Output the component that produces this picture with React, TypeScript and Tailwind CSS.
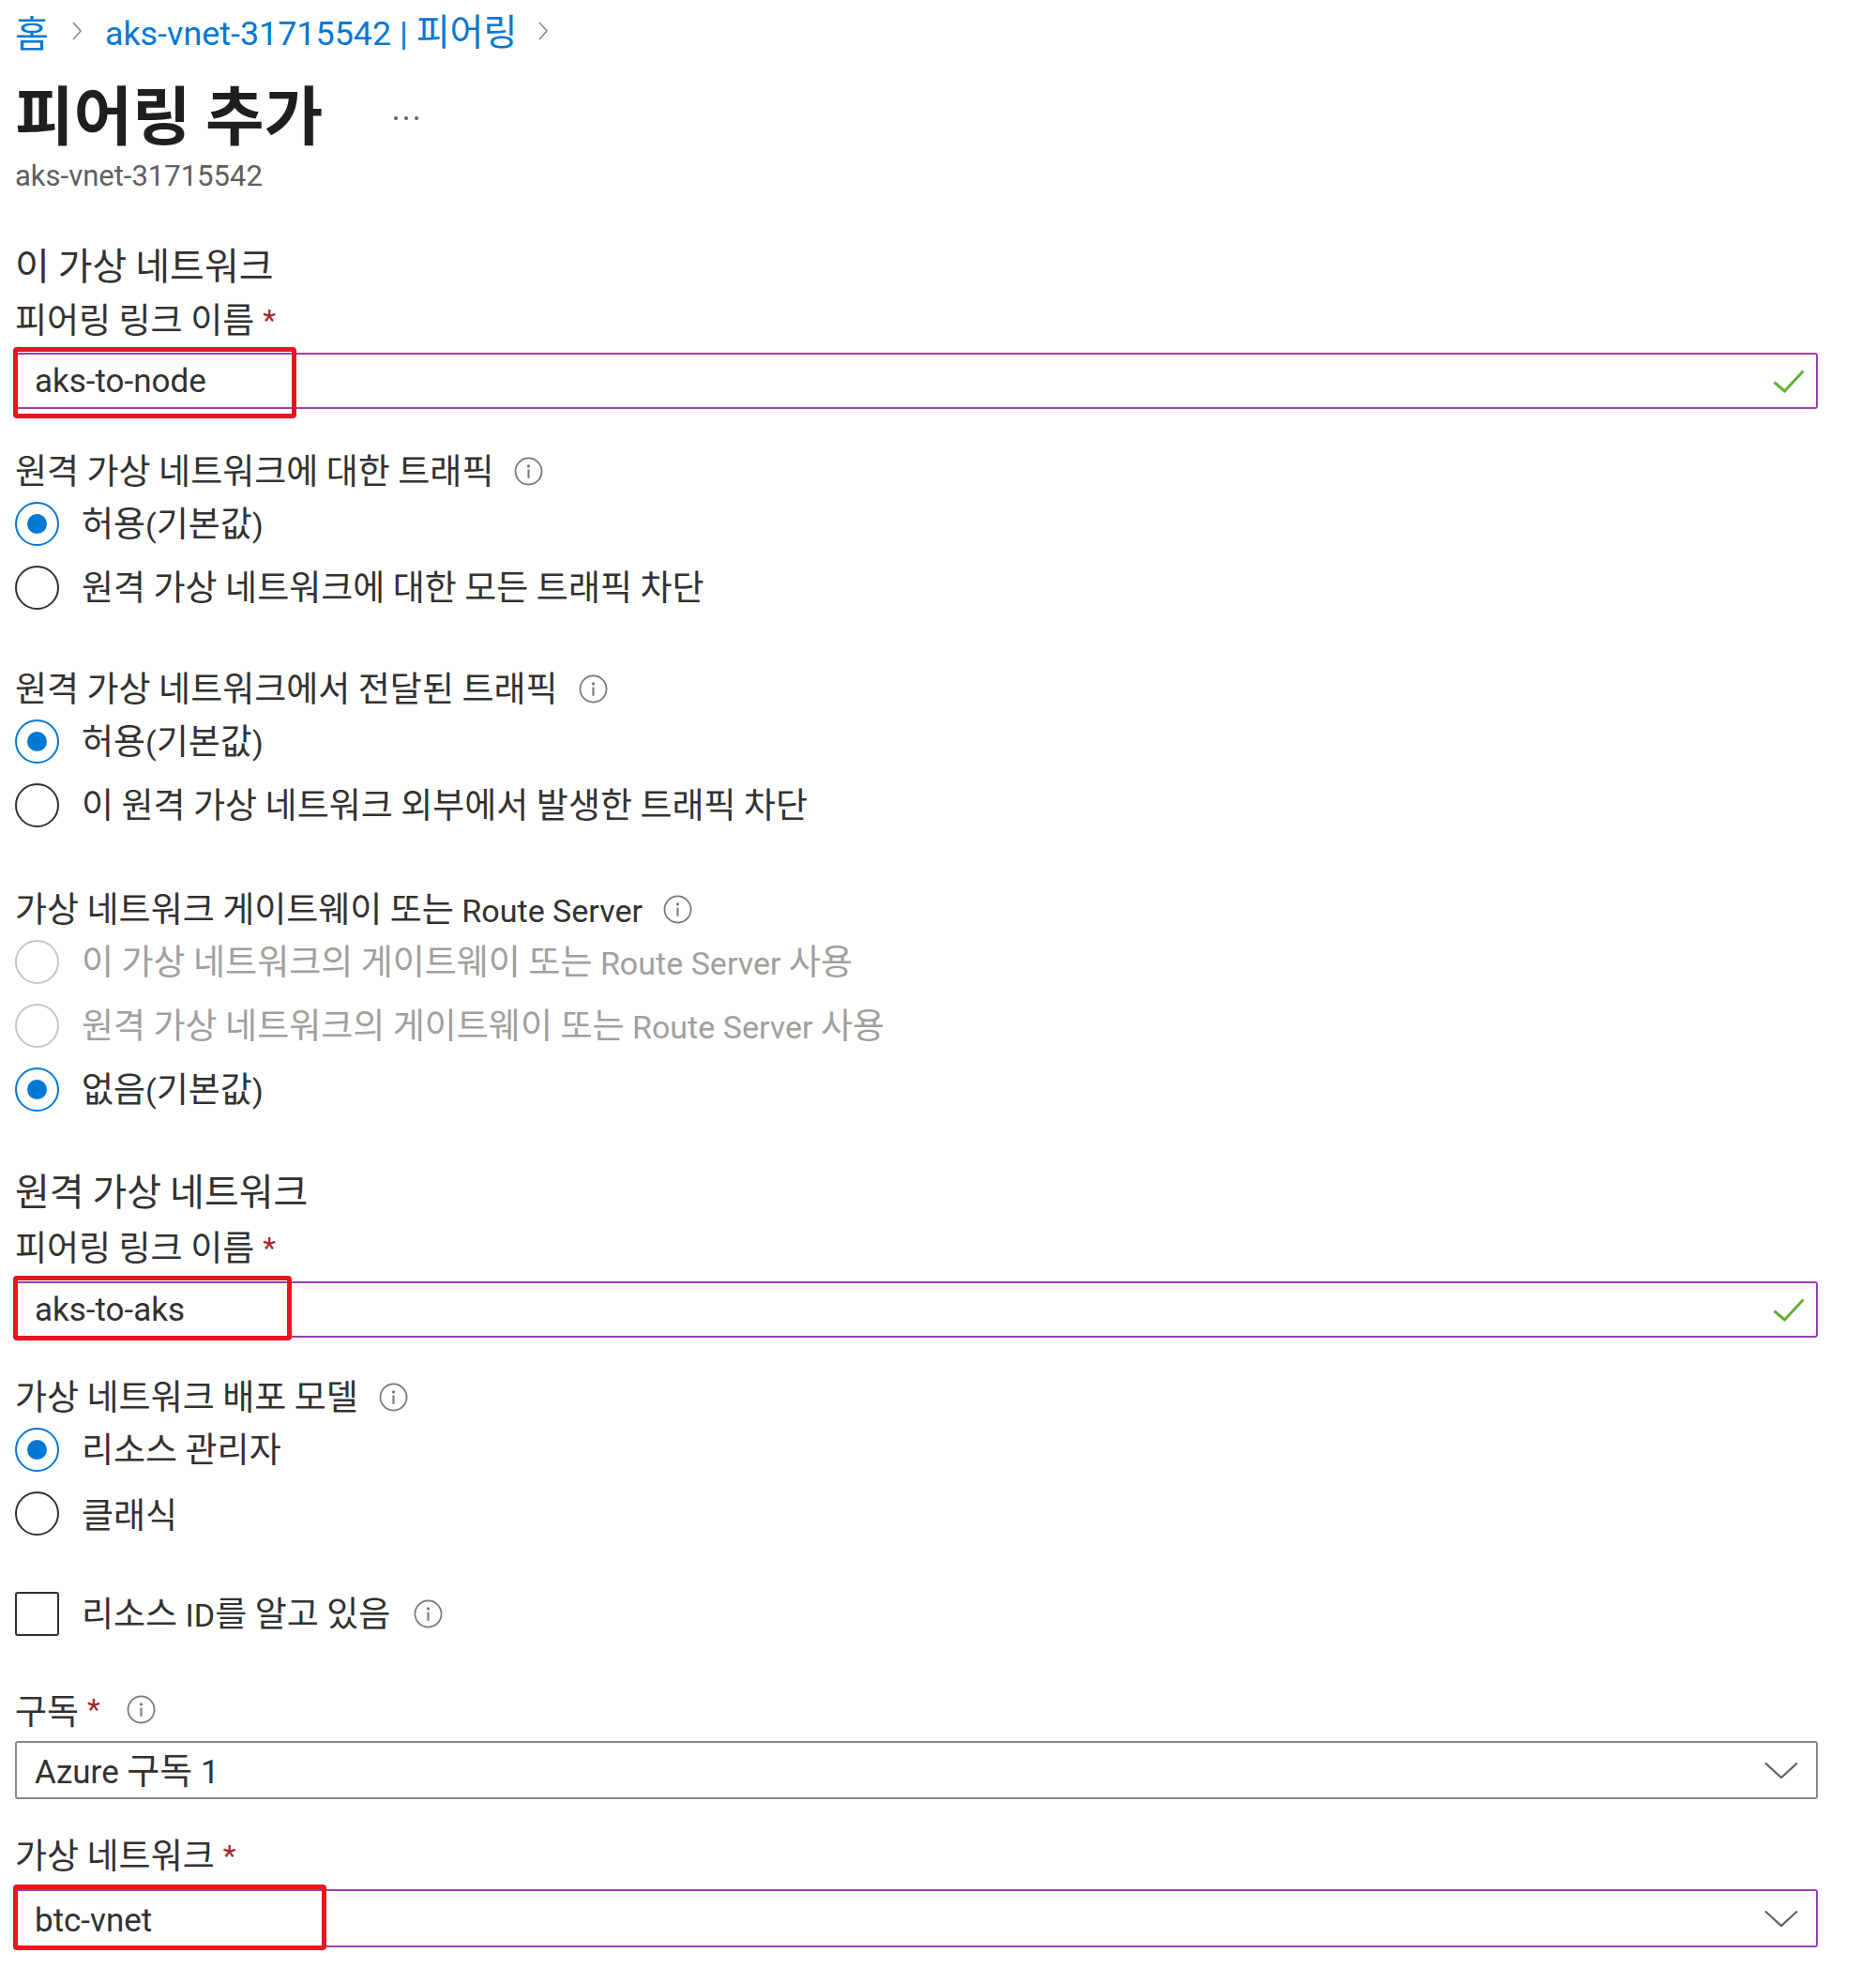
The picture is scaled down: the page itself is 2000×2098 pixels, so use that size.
const ink = "text-[#323130]";

// Hangul runs stay in Noto Sans CJK KR, the rest goes to Roboto a bit smaller
function Mixed({ text }: { text: string }) {
  const parts = text.split(/([\uAC00-\uD7A3\u3131-\u318E]+)/).filter(p => p !== "");
  return (
    <>
      {parts.map((p, i) =>
        /[\uAC00-\uD7A3\u3131-\u318E]/.test(p) ? (
          <span key={i}>{p}</span>
        ) : (
          <span key={i} className="font-['Roboto'] text-[0.92em]">{p}</span>
        )
      )}
    </>
  );
}

function InfoIcon() {
  return (
    <svg width="31" height="31" viewBox="0 0 32 32" className="shrink-0">
      <circle cx="16" cy="16" r="14.5" fill="none" stroke="#7a7977" strokeWidth="1.8" />
      <circle cx="16" cy="10.2" r="1.7" fill="#7a7977" />
      <line x1="16" y1="14" x2="16" y2="23.5" stroke="#7a7977" strokeWidth="2.2" />
    </svg>
  );
}

function Crumb() {
  return (
    <svg width="12" height="22" viewBox="0 0 12 22" className="shrink-0">
      <path d="M2 2 L10 11 L2 20" fill="none" stroke="#8a8886" strokeWidth="1.6" />
    </svg>
  );
}

function Chevron() {
  return (
    <svg width="36" height="19" viewBox="0 0 36 19">
      <path d="M1 1.5 L18 17 L35 1.5" fill="none" stroke="#605e5c" strokeWidth="2.2" />
    </svg>
  );
}

function Check() {
  return (
    <svg width="34" height="25" viewBox="0 0 34 25">
      <path d="M1.5 13.5 L12.5 23 L32.5 1.5" fill="none" stroke="#62b134" strokeWidth="3" />
    </svg>
  );
}

function Label({ text, required, info, className = "" }: { text: string; required?: boolean; info?: boolean; className?: string }) {
  return (
    <div className={`flex items-center h-[44px] text-[37px] leading-none ${ink} ${className}`}>
      <span><Mixed text={text} /></span>
      {required && <span className="ml-[9px] font-['Roboto'] text-[#a4262c] text-[32px] leading-none">*</span>}
      {info && <span className={required ? "ml-[28px]" : "ml-[22px]"}><InfoIcon /></span>}
    </div>
  );
}

function Radio({ label, checked, disabled }: { label: string; checked?: boolean; disabled?: boolean }) {
  const ring = checked ? "border-[#0078d4]" : disabled ? "border-[#c8c6c4]" : "border-[#323130]";
  return (
    <div className="flex items-center h-[68px]">
      <div className={`w-[47px] h-[47px] rounded-full border-[2.5px] ${ring} flex items-center justify-center shrink-0`}>
        {checked && <div className="w-[21px] h-[21px] rounded-full bg-[#0078d4]" />}
      </div>
      <span className={`ml-[24px] text-[37px] leading-none ${disabled ? "text-[#a19f9d]" : ink}`}>
        <Mixed text={label} />
      </span>
    </div>
  );
}

function Highlight({ w, top, bottom }: { w: number; top: number; bottom: number }) {
  return (
    <div
      className="absolute left-[-4px] border-[5px] border-[#e8141e] rounded-[4px] pointer-events-none"
      style={{ width: w, top: -top, bottom: -bottom }}
    />
  );
}

function TextBox({ value, mark, w, top, bottom }: { value: string; mark?: boolean; w: number; top: number; bottom: number }) {
  return (
    <div className="relative h-[60px] border-2 border-[#9b3fb6] rounded-[3px] flex items-center pl-[19px] pr-[12px]">
      <span className={`font-['Roboto'] text-[35px] leading-none ${ink} flex-1`}>{value}</span>
      {mark && <Check />}
      <Highlight w={w} top={top} bottom={bottom} />
    </div>
  );
}

function Dropdown({ value, purple, mark }: { value: string; purple?: boolean; mark?: boolean }) {
  return (
    <div
      className={`relative h-[62px] border-2 ${purple ? "border-[#9b3fb6]" : "border-[#8a8886]"} rounded-[3px] flex items-center pl-[19px] pr-[19px]`}
    >
      <span className={`text-[38px] leading-none ${ink} flex-1`}><Mixed text={value} /></span>
      <Chevron />
      {mark && <Highlight w={334} top={7} bottom={5} />}
    </div>
  );
}

export default function App() {
  return (
    <div className="min-h-screen bg-white font-['Noto_Sans_CJK_KR',sans-serif] pl-[16px] pt-[11px] pb-[20px]">
      <div className="w-[1922px]">
        {/* breadcrumb */}
        <div className="flex items-center h-[44px] text-[39px] leading-none text-[#0078d4]">
          <span>홈</span>
          <span className="mx-[24px]"><Crumb /></span>
          <span><Mixed text="aks-vnet-31715542 | 피어링" /></span>
          <span className="ml-[22px]"><Crumb /></span>
        </div>

        <div className="mt-[25px] flex items-center h-[80px]">
          <h1 className="text-[68px] leading-[80px] font-bold text-[#201f1e]">피어링 추가</h1>
          <div className="ml-[76px] mt-[12px] flex gap-[7px]">
            <span className="w-[4px] h-[4px] rounded-full bg-[#605e5c]" />
            <span className="w-[4px] h-[4px] rounded-full bg-[#605e5c]" />
            <span className="w-[4px] h-[4px] rounded-full bg-[#605e5c]" />
          </div>
        </div>
        <div className="mt-[5px] h-[44px] flex items-center font-['Roboto'] text-[31px] leading-none text-[#605e5c]">aks-vnet-31715542</div>

        <div className={`mt-[45px] h-[54px] flex items-center text-[40px] leading-none ${ink}`}>이 가상 네트워크</div>
        <Label className="mt-[11px]" text="피어링 링크 이름" required />
        <div className="mt-[13px]">
          <TextBox value="aks-to-node" mark w={302} top={8} bottom={12} />
        </div>

        <Label className="mt-[44px]" text="원격 가상 네트워크에 대한 트래픽" info />
        <Radio label="허용(기본값)" checked />
        <Radio label="원격 가상 네트워크에 대한 모든 트래픽 차단" />

        <Label className="mt-[52px]" text="원격 가상 네트워크에서 전달된 트래픽" info />
        <Radio label="허용(기본값)" checked />
        <Radio label="이 원격 가상 네트워크 외부에서 발생한 트래픽 차단" />

        <Label className="mt-[55px]" text="가상 네트워크 게이트웨이 또는 Route Server" info />
        <Radio label="이 가상 네트워크의 게이트웨이 또는 Route Server 사용" disabled />
        <Radio label="원격 가상 네트워크의 게이트웨이 또는 Route Server 사용" disabled />
        <Radio label="없음(기본값)" checked />

        <div className={`mt-[46px] h-[54px] flex items-center text-[40px] leading-none ${ink}`}>원격 가상 네트워크</div>
        <Label className="mt-[13px]" text="피어링 링크 이름" required />
        <div className="mt-[14px]">
          <TextBox value="aks-to-aks" mark w={297} top={8} bottom={5} />
        </div>

        <Label className="mt-[41px]" text="가상 네트워크 배포 모델" info />
        <Radio label="리소스 관리자" checked />
        <Radio label="클래식" />

        <div className="mt-[39px] flex items-center h-[68px]">
          <div className="w-[47px] h-[47px] border-[2.5px] border-[#323130] rounded-[3px] shrink-0" />
          <span className={`ml-[24px] text-[37px] leading-none ${ink}`}><Mixed text="리소스 ID를 알고 있음" /></span>
          <span className="ml-[25px]"><InfoIcon /></span>
        </div>

        <Label className="mt-[46px]" text="구독" required info />
        <div className="mt-[12px]">
          <Dropdown value="Azure 구독 1" />
        </div>

        <Label className="mt-[38px]" text="가상 네트워크" required />
        <div className="mt-[14px]">
          <Dropdown value="btc-vnet" purple mark />
        </div>
      </div>
    </div>
  );
}
